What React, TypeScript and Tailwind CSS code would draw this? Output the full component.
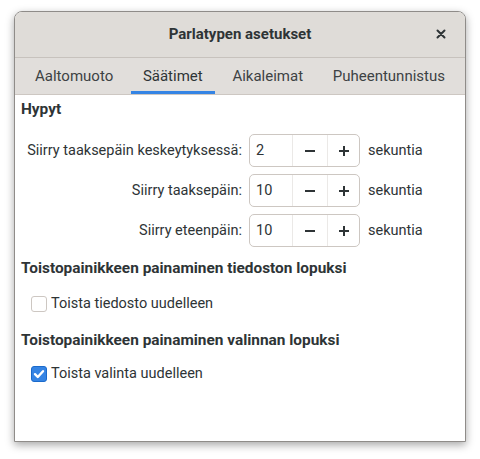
import React, { useState } from 'react';

const FONT = "font-['Roboto',sans-serif]";

interface SpinRowProps {
  label: string;
  value: number;
}

const SpinRow: React.FC<SpinRowProps> = ({ label, value }) => {
  const [v, setV] = useState(value);
  return (
    <div className="flex items-center h-[33px]">
      <div className="w-[228px] whitespace-nowrap text-right pr-[7px] text-[#2e3436]">{label}</div>
      <div className="flex h-[33px] w-[111px] rounded-[5px] border border-[#cdc7c2] bg-white overflow-hidden">
        <div className="w-[42px] flex items-center pl-[6px] text-[#2e3436]">{v}</div>
        <button
          onClick={() => setV(Math.max(0, v - 1))}
          className="w-[35px] flex items-center justify-center border-l border-[#ebe9e7]"
        >
          <svg width="14" height="14" viewBox="0 0 14 14">
            <rect x="2" y="6" width="10" height="2" fill="#2e3436" />
          </svg>
        </button>
        <button
          onClick={() => setV(v + 1)}
          className="flex-1 flex items-center justify-center border-l border-[#ebe9e7]"
        >
          <svg width="14" height="14" viewBox="0 0 14 14">
            <rect x="2" y="6" width="10" height="2" fill="#2e3436" />
            <rect x="6" y="2" width="2" height="10" fill="#2e3436" />
          </svg>
        </button>
      </div>
      <div className="pl-[8px] text-[#2e3436]">sekuntia</div>
    </div>
  );
};

const Check: React.FC<{ checked: boolean; label: string }> = ({ checked, label }) => (
  <label className="flex items-center gap-[4px] h-[20px] pl-[10px] text-[#2e3436]">
    {checked ? (
      <span className="w-[16px] h-[16px] rounded-[3px] bg-[#3584e4] border border-[#1b6acb] flex items-center justify-center">
        <svg width="12" height="12" viewBox="0 0 12 12">
          <path d="M2 6.2 L4.8 9 L10 3.2" stroke="white" strokeWidth="2.4" fill="none" strokeLinecap="round" strokeLinejoin="round" />
        </svg>
      </span>
    ) : (
      <span className="w-[16px] h-[16px] rounded-[3px] bg-white border border-[#cdc7c2]" />
    )}
    <span>{label}</span>
  </label>
);

export default function App() {
  const tabs = ['Aaltomuoto', 'Säätimet', 'Aikaleimat', 'Puheentunnistus'];
  const [active, setActive] = useState(1);

  return (
    <div className={`w-[480px] h-[459px] bg-white pt-[11px] pl-[14px] text-[14.5px] ${FONT}`}>
      <div className="w-[452px] h-[431px] flex flex-col rounded-t-[8px] border border-[#8f8c89] shadow-[0_3px_9px_rgba(0,0,0,0.35)] overflow-hidden bg-white">
        {/* Header */}
        <div className="h-[46px] shrink-0 relative flex items-center justify-center bg-[#dfdcd8] border-b border-[#c7c2bd]">
          <span className="font-bold text-[15px] text-[#2e3436]">Parlatypen asetukset</span>
          <button className="absolute right-[16px] top-[14px] w-[16px] h-[16px] flex items-center justify-center">
            <svg width="10" height="10" viewBox="0 0 10 10">
              <path d="M1.5 1.5 L8.5 8.5 M8.5 1.5 L1.5 8.5" stroke="#2e3436" strokeWidth="2" strokeLinecap="round" />
            </svg>
          </button>
        </div>

        {/* Tabs */}
        <div className="h-[37px] shrink-0 flex justify-between px-[8px] text-[15px] bg-[#e1dedb] border-b border-[#cdc7c2]">
          {tabs.map((t, i) => (
            <button
              key={t}
              onClick={() => setActive(i)}
              className={`px-[12px] h-full flex items-center border-b-[3px] ${
                i === active ? 'border-[#3584e4] text-[#2e3436]' : 'border-transparent text-[#3d4244]'
              }`}
            >
              <span className="pt-[3px]">{t}</span>
            </button>
          ))}
        </div>

        {/* Content */}
        <div className="flex-1 flex flex-col pl-[6px] pt-[5px]">
          <div className="font-bold text-[15.4px] text-[#2e3436] h-[20px] flex items-center">Hypyt</div>
          <div className="flex flex-col gap-[7px] mt-[14px]">
            <SpinRow label="Siirry taaksepäin keskeytyksessä:" value={2} />
            <SpinRow label="Siirry taaksepäin:" value={10} />
            <SpinRow label="Siirry eteenpäin:" value={10} />
          </div>
          <div className="font-bold text-[15.4px] text-[#2e3436] h-[20px] flex items-center mt-[12px]">
            Toistopainikkeen painaminen tiedoston lopuksi
          </div>
          <div className="mt-[15px]">
            <Check checked={false} label="Toista tiedosto uudelleen" />
          </div>
          <div className="font-bold text-[15.4px] text-[#2e3436] h-[20px] flex items-center mt-[17px]">
            Toistopainikkeen painaminen valinnan lopuksi
          </div>
          <div className="mt-[13px]">
            <Check checked={true} label="Toista valinta uudelleen" />
          </div>
        </div>
      </div>
    </div>
  );
}
